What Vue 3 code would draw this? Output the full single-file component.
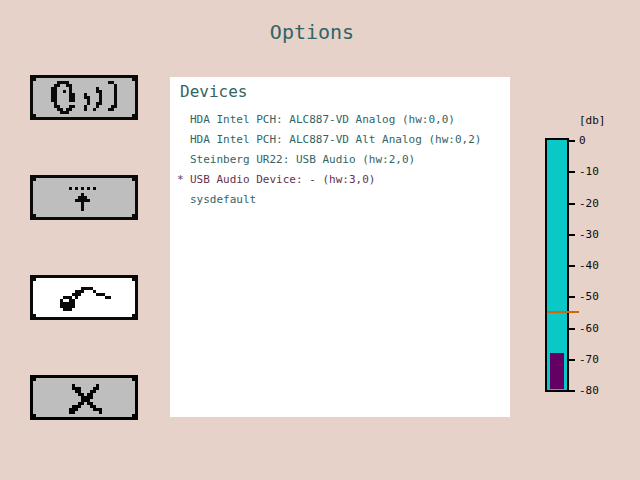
<script setup>
import { ref } from 'vue'

// Pixel glyphs: [column, row, run length] on a 36 x 15 grid
const glyphs = {
  sound: [
    [9, 2, 4], [8, 3, 2], [12, 3, 2], [7, 4, 2], [13, 4, 1], [7, 5, 2], [11, 5, 1], [13, 5, 1],
    [7, 6, 2], [13, 6, 2], [7, 7, 2], [13, 7, 2], [7, 8, 2], [13, 8, 2], [8, 9, 1],
    [8, 10, 2], [13, 10, 2], [9, 11, 2], [12, 11, 2], [10, 12, 3],
    [18, 6, 1], [18, 7, 2], [19, 8, 1], [19, 9, 1], [18, 10, 1], [18, 11, 1],
    [22, 4, 1], [22, 5, 2], [23, 6, 1], [23, 7, 1], [23, 8, 1], [22, 9, 2], [22, 10, 1], [21, 11, 1],
    [26, 2, 2], [28, 3, 1], [28, 4, 1], [28, 5, 1], [28, 6, 1], [28, 7, 1], [28, 8, 1], [28, 9, 1], [27, 10, 2], [26, 11, 2]
  ],
  load: [
    [13, 4, 1], [15, 4, 1], [17, 4, 1], [19, 4, 1], [21, 4, 1],
    [17, 6, 1], [16, 7, 3], [15, 8, 5], [17, 9, 1], [17, 10, 1], [17, 11, 1]
  ],
  input: [
    [17, 4, 4], [15, 5, 3], [21, 5, 1], [14, 6, 3], [22, 6, 3], [11, 7, 3], [15, 7, 1], [25, 7, 2],
    [10, 8, 1], [13, 8, 2], [10, 9, 5], [10, 10, 5], [11, 11, 3]
  ],
  close: [
    [14, 3, 1], [22, 3, 1], [14, 4, 3], [21, 4, 2], [15, 5, 2], [20, 5, 2], [16, 6, 2], [19, 6, 2],
    [17, 7, 4], [17, 8, 3], [16, 9, 2], [19, 9, 2], [14, 10, 3], [20, 10, 2],
    [13, 11, 3], [21, 11, 3], [13, 12, 2], [23, 12, 1]
  ]
}
const buttons = [
  { id: 'sound', label: 'Sound' },
  { id: 'load', label: 'Load' },
  { id: 'input', label: 'Input device' },
  { id: 'close', label: 'Close' }
]
const path = id => glyphs[id].map(([x, y, w]) => `M${x} ${y}h${w}v1h-${w}z`).join('')

const active = ref('input')
const devices = [
  'HDA Intel PCH: ALC887-VD Analog (hw:0,0)',
  'HDA Intel PCH: ALC887-VD Alt Analog (hw:0,2)',
  'Steinberg UR22: USB Audio (hw:2,0)',
  'USB Audio Device: - (hw:3,0)',
  'sysdefault'
]
const selected = ref(3)
const ticks = ['0', '-10', '-20', '-30', '-40', '-50', '-60', '-70', '-80']
const level = 14.5
const threshold = 68.4
</script>

<template>
  <main class="screen">
    <h1 class="title">Options</h1>
    <div class="content">
      <nav class="menu" aria-label="Options">
        <button
          v-for="b in buttons"
          :key="b.id"
          type="button"
          class="menu-button"
          :class="[b.id, { active: active === b.id }]"
          :aria-label="b.label"
          @click="active = b.id"
        >
          <svg viewBox="0 0 36 15" shape-rendering="crispEdges" aria-hidden="true">
            <path d="M0 0h36v15h-36zM1 2v11h1v1h32v-1h1v-11h-1v-1h-32v1z" fill-rule="evenodd" />
            <path :d="path(b.id)" />
          </svg>
        </button>
      </nav>
      <section class="panel">
        <h2 class="heading">Devices</h2>
        <ul class="devices">
          <li v-for="(d, i) in devices" :key="d">
            <button type="button" class="device" :class="{ selected: selected === i }" @click="selected = i">
              <span class="mark">{{ selected === i ? '*' : '' }}</span>
              <span>{{ d }}</span>
            </button>
          </li>
        </ul>
      </section>
      <section class="meter" aria-label="Input level">
        <div class="unit">[db]</div>
        <div class="gauge">
          <div class="bar">
            <div class="level" :style="{ height: level + '%' }"></div>
            <div class="threshold" :style="{ top: threshold + '%' }"></div>
          </div>
          <ol class="scale">
            <li v-for="t in ticks" :key="t"><i class="tick"></i>{{ t }}</li>
          </ol>
        </div>
      </section>
    </div>
  </main>
</template>

<style>
body {
  margin: 0;
  background: #e6d2c9;
}
</style>

<style scoped>
.screen {
  box-sizing: border-box;
  min-height: 100vh;
  padding: 20px 30px;
  background: #e6d2c9;
  color: #326464;
  font-family: "DejaVu Sans Mono", monospace;
  font-size: 11px;
}
.title {
  margin: 0;
  padding-right: 16px;
  font-size: 20px;
  font-weight: 400;
  line-height: 24px;
  text-align: center;
}
.content {
  display: flex;
  align-items: flex-start;
  margin-top: 31px;
}
.menu {
  display: flex;
  flex: none;
  flex-direction: column;
  gap: 55px;
  width: 108px;
}
.menu-button {
  display: block;
  padding: 0;
  border: 0;
  background: #bebebe;
  color: #0a0a0a;
  cursor: pointer;
}
.menu-button.active {
  background: #fff;
}
.menu-button.close {
  color: #000;
}
.menu-button svg {
  display: block;
  width: 100%;
  fill: currentColor;
}
.panel {
  box-sizing: border-box;
  flex: 1;
  min-width: 0;
  min-height: 340px;
  margin: 2px 35px 0 32px;
  padding: 5px 0 0 7px;
  background: #fff;
}
.heading {
  margin: 0;
  padding-left: 3px;
  font-size: 16px;
  font-weight: 400;
  line-height: 20px;
}
.devices {
  margin: 8px 0 0;
  padding: 0;
  list-style: none;
}
.device {
  display: flex;
  width: 100%;
  padding: 0;
  border: 0;
  background: none;
  color: inherit;
  font: inherit;
  line-height: 20px;
  text-align: left;
  white-space: nowrap;
  cursor: pointer;
}
.device.selected {
  color: #643250;
}
.mark {
  flex: none;
  width: 13px;
}
.meter {
  flex: none;
  width: 65px;
  padding-top: 36px;
  color: #0a0a0a;
}
.unit {
  padding-left: 34px;
  line-height: 20px;
}
.gauge {
  display: flex;
  margin-top: 7px;
}
.bar {
  position: relative;
  display: flex;
  box-sizing: border-box;
  flex: none;
  align-items: flex-end;
  width: 24px;
  height: 254px;
  padding: 0 3px 1px;
  border: 2px solid #000;
  background: #0ac8c8;
}
.level {
  width: 14px;
  background: #640064;
}
.threshold {
  position: absolute;
  left: 0;
  width: 32px;
  height: 2px;
  background: #d2640a;
}
.scale {
  display: flex;
  flex-direction: column;
  justify-content: space-between;
  height: 264px;
  margin: -4px 0;
  padding: 0;
  list-style: none;
}
.scale li {
  display: flex;
  align-items: center;
  gap: 4px;
  line-height: 14px;
}
.tick {
  width: 6px;
  height: 2px;
  background: #000;
}
</style>
